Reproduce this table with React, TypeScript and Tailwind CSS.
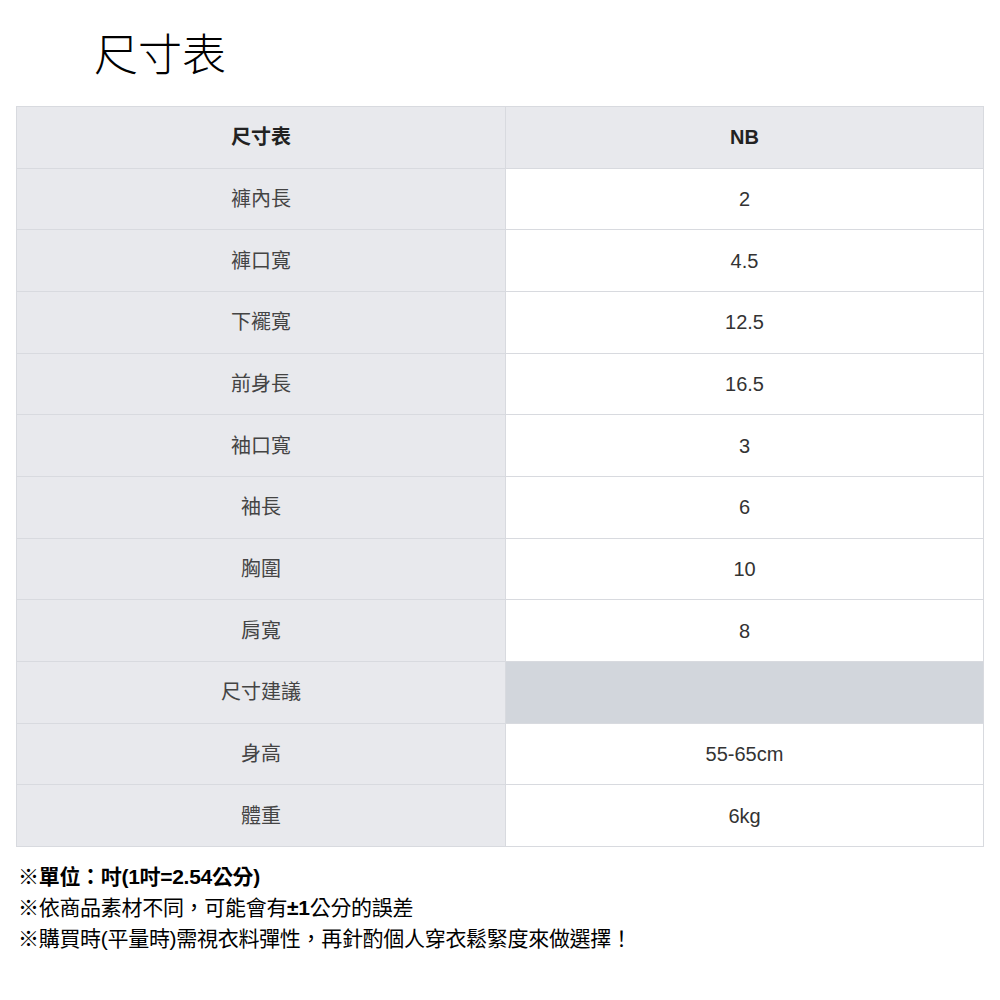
const rows: ReadonlyArray<[string, string]> = [
  ["褲內長", "2"],
  ["褲口寬", "4.5"],
  ["下襬寬", "12.5"],
  ["前身長", "16.5"],
  ["袖口寬", "3"],
  ["袖長", "6"],
  ["胸圍", "10"],
  ["肩寬", "8"],
];

const extra: ReadonlyArray<[string, string]> = [
  ["身高", "55-65cm"],
  ["體重", "6kg"],
];

const font = { fontFamily: '"Liberation Sans", "Noto Sans CJK TC", sans-serif' };

function Row({ label, value }: { label: string; value: string }) {
  return (
    <div className="grid h-[61.67px] grid-cols-[489px_1fr] border-b border-[#d8dadf]">
      <div className="flex items-center justify-center border-r border-[#d8dadf] bg-[#e8e9ed] text-[20px] text-[#444]">
        {label}
      </div>
      <div className="flex items-center justify-center bg-white text-[20px] text-[#333]">
        {value}
      </div>
    </div>
  );
}

export default function App() {
  return (
    <div className="min-h-[1000px] w-[1000px] bg-white" style={font}>
      <h1 className="pl-[94px] pt-[26px] text-[44px] font-light leading-[60px] text-black">
        尺寸表
      </h1>
      <div className="ml-[16px] mt-[20px] w-[968px] border-l border-r border-t border-[#d8dadf]">
        <div className="grid h-[61.67px] grid-cols-[489px_1fr] border-b border-[#d8dadf] bg-[#e8e9ed]">
          <div className="flex items-center justify-center border-r border-[#d8dadf] text-[20px] font-bold text-[#222]">
            尺寸表
          </div>
          <div className="flex items-center justify-center text-[20px] font-bold text-[#222]">
            NB
          </div>
        </div>
        {rows.map(([l, v]) => (
          <Row key={l} label={l} value={v} />
        ))}
        <div className="grid h-[61.67px] grid-cols-[489px_1fr] border-b border-[#d8dadf]">
          <div className="flex items-center justify-center border-r border-[#d8dadf] bg-[#e8e9ed] text-[20px] text-[#444]">
            尺寸建議
          </div>
          <div className="bg-[#d2d6dc]" />
        </div>
        {extra.map(([l, v]) => (
          <Row key={l} label={l} value={v} />
        ))}
      </div>
      <div className="mt-[14px] pl-[18px] text-[21px] leading-[31px] tracking-[-0.3px] text-black">
        <p className="font-bold">※單位：吋(1吋=2.54公分)</p>
        <p>※依商品素材不同，可能會有<b>±1</b>公分的誤差</p>
        <p>※購買時(平量時)需視衣料彈性，再針酌個人穿衣鬆緊度來做選擇！</p>
      </div>
    </div>
  );
}
